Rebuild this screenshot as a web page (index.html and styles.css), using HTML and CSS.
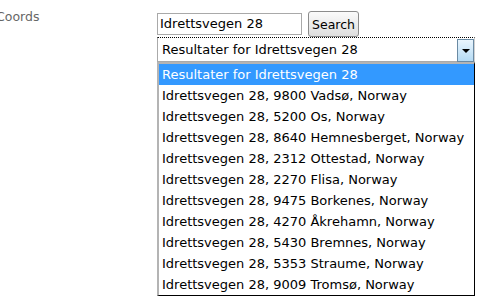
FILE: index.html
```html
<!DOCTYPE html>
<html lang="en">
  <head>
    <meta charset="UTF-8" />
    <meta name="viewport" content="width=device-width, initial-scale=1.0" />
    <title>Coords</title>
    <link rel="stylesheet" href="styles.css">
  </head>
  <body>
    <div class="field">
      <label class="label">Coords</label>
      <div class="controls">
        <div class="search-row">
          <div class="text-input">Idrettsvegen 28</div>
          <button class="search-btn">Search</button>
        </div>
        <div class="select">
          <span class="select-value">Resultater for Idrettsvegen 28</span>
          <span class="select-arrow"></span>
        </div>
        <ul class="options">
          <li class="selected">Resultater for Idrettsvegen 28</li>
          <li>Idrettsvegen 28, 9800 Vadsø, Norway</li>
          <li>Idrettsvegen 28, 5200 Os, Norway</li>
          <li>Idrettsvegen 28, 8640 Hemnesberget, Norway</li>
          <li>Idrettsvegen 28, 2312 Ottestad, Norway</li>
          <li>Idrettsvegen 28, 2270 Flisa, Norway</li>
          <li>Idrettsvegen 28, 9475 Borkenes, Norway</li>
          <li>Idrettsvegen 28, 4270 Åkrehamn, Norway</li>
          <li>Idrettsvegen 28, 5430 Bremnes, Norway</li>
          <li>Idrettsvegen 28, 5353 Straume, Norway</li>
          <li>Idrettsvegen 28, 9009 Tromsø, Norway</li>
        </ul>
      </div>
    </div>
  </body>
</html>
```

FILE: styles.css
```css
body {
  margin: 0;
  background: #fff;
  font-family: "DejaVu Sans", Verdana, sans-serif;
  font-size: 13px;
  color: #000;
  overflow: hidden;
}
.field {
  display: flex;
}
.label {
  width: 161px;
  flex-shrink: 0;
  padding-top: 9px;
  margin-left: -4px;
  color: #666;
  font-size: 12.5px;
}
.controls {
  width: 318px;
  padding-top: 11px;
}
.search-row {
  display: flex;
  align-items: center;
  gap: 6px;
}
.text-input {
  width: 141px;
  height: 20px;
  line-height: 20px;
  padding-left: 2px;
  border: 1px solid #a9a9a9;
}
.search-btn {
  font-family: inherit;
  font-size: 12.5px;
  height: 26px;
  padding: 0 3px;
  border: 1px solid #8c8c8c;
  border-radius: 3px;
  background: linear-gradient(#fbfbfb, #dedede);
  color: #000;
}
.select {
  display: flex;
  justify-content: space-between;
  align-items: center;
  height: 23px;
  border: 1px solid #aaa;
  border-top: 1px dotted #000;
  border-right-color: #d0d0d0;
  padding: 0 0 0 4px;
}
.select-arrow {
  width: 15px;
  height: 21px;
  margin-top: 1px;
  border: 1px solid #6a8aa3;
  background: linear-gradient(#eaf5fd, #b5dbf4);
  position: relative;
}
.select-arrow::after {
  content: "";
  position: absolute;
  left: 4px;
  top: 9px;
  border-left: 4px solid transparent;
  border-right: 4px solid transparent;
  border-top: 4px solid #000;
}
.options {
  list-style: none;
  margin: 0;
  padding: 0;
  border: 1px solid #000;
  border-top: 2px solid #b4b4b4;
  border-left: 2px solid #b4b4b4;
}
.options li {
  height: 21px;
  line-height: 21px;
  padding-left: 3px;
  white-space: nowrap;
}
.options .selected {
  background: #3399ff;
  color: #fff;
}
```
